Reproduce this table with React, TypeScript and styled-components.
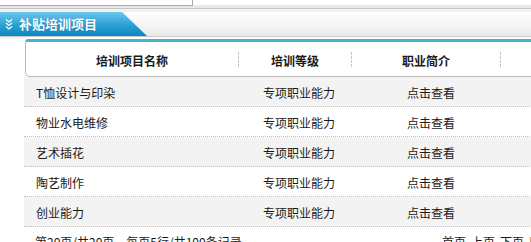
import React from "react";
import styled, { createGlobalStyle } from "styled-components";

const Global = createGlobalStyle`
  html, body { margin: 0; padding: 0; background: #fff; overflow: hidden; }
  body { font-family: "Noto Sans CJK SC", "Liberation Sans", sans-serif; font-size: 12px; color: #1a1a1a; }
`;

const Page = styled.div`
  width: 560px;
`;

const TopStrip = styled.div`
  height: 12px;
  display: flex;
  align-items: flex-start;
  background: linear-gradient(to bottom, #fff 0 5px, #e9e9e9 5px 8px, #c6c6c6 8px 9px, #f1f1f1 9px 12px);
`;

const SearchBox = styled.div`
  width: 193px;
  height: 6px;
  box-sizing: border-box;
  background: #fff;
  border-right: 1px solid #aaa;
  border-bottom: 1px solid #aaa;
`;

const TitleBar = styled.div`
  height: 25px;
  box-sizing: border-box;
  display: flex;
  background: linear-gradient(to bottom, #ffffff, #f4f4f4 60%, #e9e9e9);
  border-bottom: 1px solid #c9c9c9;
`;

const Tab = styled.div`
  width: 147px;
  height: 24px;
  display: flex;
  align-items: center;
  gap: 6px;
  padding-left: 5px;
  box-sizing: border-box;
  clip-path: polygon(0 0, 122px 0, 147px 100%, 0 100%);
  background: linear-gradient(to bottom, #6cc8ee, #2ea3d6 50%, #0b87bf);
`;

const TabTitle = styled.span`
  color: #fff;
  font-weight: bold;
  font-size: 13px;
  line-height: 24px;
  text-shadow: 0 0 1px rgba(0, 60, 100, 0.5);
`;

const Gap = styled.div`
  height: 2px;
  background: linear-gradient(to right, #f4f4f4 0 25px, #fff 25px);
`;

const Header = styled.div`
  margin-left: 25px;
  height: 38px;
  box-sizing: border-box;
  display: flex;
  align-items: center;
  background: #fff;
  border-top: 3px solid #41b5c9;
  border-left: 1px solid #b9b9b9;
  border-bottom: 1px solid #b9b9b9;
  border-bottom-left-radius: 5px;
  border-top-left-radius: 3px;
`;

const HeaderCell = styled.div<{ $w: number }>`
  width: ${(p) => p.$w}px;
  text-align: center;
  font-weight: bold;
  font-size: 12px;
  color: #1a1a1a;
  padding-top: 2px;
`;

const Divider = styled.div`
  width: 0;
  height: 15px;
  border-left: 1px dashed #c4c4c4;
`;

const Row = styled.div<{ $alt: boolean }>`
  margin-left: 24px;
  height: 30px;
  box-sizing: border-box;
  display: grid;
  grid-template-columns: 227px 144px 1fr;
  align-items: center;
  padding-left: 12px;
  padding-top: 2px;
  background: ${(p) => (p.$alt ? "#f3f3f3" : "#fff")};
  border-bottom: 1px dotted #c2c2c2;
`;

const Cell = styled.div`
  font-size: 12px;
  color: #1a1a1a;
  white-space: nowrap;
`;

const Footer = styled.div`
  display: flex;
  justify-content: space-between;
  padding: 6px 7px 0 35px;
  font-size: 12px;
  color: #1a1a1a;
  white-space: nowrap;
`;

const Pager = styled.div`
  display: flex;
  gap: 5px;
`;

const ChevronIcon = () => (
  <svg width="8" height="12" viewBox="0 0 8 12" fill="none" stroke="#fff" strokeWidth="1.2">
    <polyline points="1,1.5 4,4 7,1.5" />
    <polyline points="1,5 4,7.5 7,5" />
    <polyline points="1,8.5 4,11 7,8.5" />
  </svg>
);

const rows = [
  ["T恤设计与印染", "专项职业能力", "点击查看"],
  ["物业水电维修", "专项职业能力", "点击查看"],
  ["艺术插花", "专项职业能力", "点击查看"],
  ["陶艺制作", "专项职业能力", "点击查看"],
  ["创业能力", "专项职业能力", "点击查看"],
];

export default function App() {
  return (
    <Page>
      <Global />
      <TopStrip>
        <SearchBox />
      </TopStrip>
      <TitleBar>
        <Tab>
          <ChevronIcon />
          <TabTitle>补贴培训项目</TabTitle>
        </Tab>
      </TitleBar>
      <Gap />
      <Header>
        <HeaderCell $w={212}>培训项目名称</HeaderCell>
        <Divider />
        <HeaderCell $w={112}>培训等级</HeaderCell>
        <Divider />
        <HeaderCell $w={148}>职业简介</HeaderCell>
        <Divider />
      </Header>
      {rows.map((r, i) => (
        <Row key={i} $alt={i % 2 === 0}>
          <Cell>{r[0]}</Cell>
          <Cell>{r[1]}</Cell>
          <Cell>{r[2]}</Cell>
        </Row>
      ))}
      <Footer>
        <span>第20页/共20页，每页5行/共100条记录</span>
        <Pager>
          <span>首页</span>
          <span>上页</span>
          <span>下页</span>
          <span>尾页</span>
        </Pager>
      </Footer>
    </Page>
  );
}
